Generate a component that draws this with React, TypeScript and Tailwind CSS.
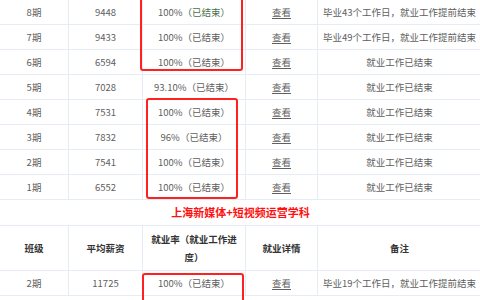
const rows = [
  { cls: '8期', pay: '9448', rate: '100%（已结束）', note: '毕业43个工作日，就业工作提前结束', green: true },
  { cls: '7期', pay: '9433', rate: '100%（已结束）', note: '毕业49个工作日，就业工作提前结束' },
  { cls: '6期', pay: '6594', rate: '100%（已结束）', note: '就业工作已结束' },
  { cls: '5期', pay: '7028', rate: '93.10%（已结束）', note: '就业工作已结束' },
  { cls: '4期', pay: '7531', rate: '100%（已结束）', note: '就业工作已结束' },
  { cls: '3期', pay: '7832', rate: '96%（已结束）', note: '就业工作已结束' },
  { cls: '2期', pay: '7541', rate: '100%（已结束）', note: '就业工作已结束' },
  { cls: '1期', pay: '6552', rate: '100%（已结束）', note: '就业工作已结束' },
];

const td = 'border border-[#e6ecf3] h-[25px] p-0 text-center align-middle whitespace-nowrap';

const Row = ({ r }: { r: { cls: string; pay: string; rate: string; note: string; green?: boolean } }) => {
  const [num, rest] = r.rate.split('（');
  return (
    <tr>
      <td className={td}>{r.cls}</td>
      <td className={td}>{r.pay}</td>
      <td className={td}>
        {num}
        <span className={r.green ? 'text-[#4b6f4b]' : ''}>（{rest}</span>
      </td>
      <td className={td}>
        <span className="underline underline-offset-2">查看</span>
      </td>
      <td className={td}>{r.note}</td>
    </tr>
  );
};

export default function App() {
  return (
    <div
      className="relative w-[480px] h-[300px] overflow-hidden bg-white text-[#606060] text-[9.5px]"
      style={{ fontFamily: '"Noto Sans CJK SC", "Noto Sans", sans-serif' }}
    >
      <table className="table-fixed border-collapse w-[482px] -ml-px -mt-px">
        <colgroup>
          <col className="w-[69px]" />
          <col className="w-[74px]" />
          <col className="w-[103px]" />
          <col className="w-[72px]" />
          <col className="w-[164px]" />
        </colgroup>
        <tbody>
          {rows.map((r) => (
            <Row key={r.cls} r={r} />
          ))}
          <tr>
            <td
              colSpan={5}
              className="border border-[#e6ecf3] h-[26px] p-0 text-center align-middle font-bold text-[11px] text-[#ff1010]"
            >
              上海新媒体+短视频运营学科
            </td>
          </tr>
          <tr className="font-bold text-[#333] text-[9.5px] leading-[18px]">
            <td className="border border-[#e6ecf3] h-[45px] text-center">班级</td>
            <td className="border border-[#e6ecf3] text-center">平均薪资</td>
            <td className="border border-[#e6ecf3] text-center px-2">就业率（就业工作进度）</td>
            <td className="border border-[#e6ecf3] text-center">就业详情</td>
            <td className="border border-[#e6ecf3] text-center">备注</td>
          </tr>
          <Row r={{ cls: '2期', pay: '11725', rate: '100%（已结束）', note: '毕业19个工作日，就业工作提前结束' }} />
        </tbody>
      </table>

      <div className="absolute left-[140px] top-[-30px] w-[103px] h-[101px] border-2 border-[#ff2020] rounded-[3px]" />
      <div className="absolute left-[146px] top-[98px] w-[92px] h-[101px] border-2 border-[#ff2020] rounded-[3px]" />
      <div className="absolute left-[142px] top-[273px] w-[102px] h-[60px] border-2 border-[#ff2020] rounded-[3px]" />
    </div>
  );
}
